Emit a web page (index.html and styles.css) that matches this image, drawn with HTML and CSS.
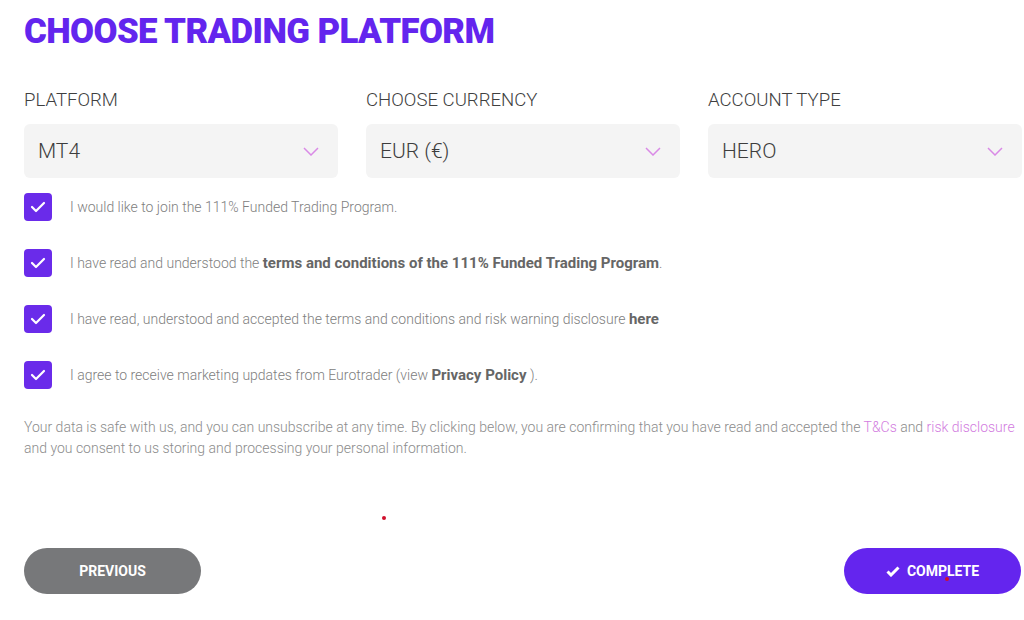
FILE: index.html
```html
<!DOCTYPE html>
<html>
<head>
<meta charset="utf-8">
<link rel="stylesheet" href="styles.css">
</head>
<body>
<main class="page">
  <h1 class="title">CHOOSE TRADING PLATFORM</h1>

  <div class="fields">
    <div class="field">
      <label class="label">PLATFORM</label>
      <div class="select"><span>MT4</span>
        <svg class="chev" width="16" height="9" viewBox="0 0 16 9"><path d="M1 1 L8 8 L15 1" fill="none" stroke="#d98ae6" stroke-width="1.5"/></svg>
      </div>
    </div>
    <div class="field">
      <label class="label">CHOOSE CURRENCY</label>
      <div class="select"><span>EUR (€)</span>
        <svg class="chev" width="16" height="9" viewBox="0 0 16 9"><path d="M1 1 L8 8 L15 1" fill="none" stroke="#d98ae6" stroke-width="1.5"/></svg>
      </div>
    </div>
    <div class="field">
      <label class="label">ACCOUNT TYPE</label>
      <div class="select"><span>HERO</span>
        <svg class="chev" width="16" height="9" viewBox="0 0 16 9"><path d="M1 1 L8 8 L15 1" fill="none" stroke="#d98ae6" stroke-width="1.5"/></svg>
      </div>
    </div>
  </div>

  <ul class="checks">
    <li class="check">
      <span class="box"><svg width="16" height="12" viewBox="0 0 16 12"><path d="M2 6 L6 10 L14 2" fill="none" stroke="#fff" stroke-width="2.2" stroke-linecap="round" stroke-linejoin="round"/></svg></span>
      <span class="ctext">I would like to join the 111% Funded Trading Program.</span>
    </li>
    <li class="check">
      <span class="box"><svg width="16" height="12" viewBox="0 0 16 12"><path d="M2 6 L6 10 L14 2" fill="none" stroke="#fff" stroke-width="2.2" stroke-linecap="round" stroke-linejoin="round"/></svg></span>
      <span class="ctext">I have read and understood the <b>terms and conditions of the 111% Funded Trading Program</b>.</span>
    </li>
    <li class="check">
      <span class="box"><svg width="16" height="12" viewBox="0 0 16 12"><path d="M2 6 L6 10 L14 2" fill="none" stroke="#fff" stroke-width="2.2" stroke-linecap="round" stroke-linejoin="round"/></svg></span>
      <span class="ctext">I have read, understood and accepted the terms and conditions and risk warning disclosure <b>here</b></span>
    </li>
    <li class="check">
      <span class="box"><svg width="16" height="12" viewBox="0 0 16 12"><path d="M2 6 L6 10 L14 2" fill="none" stroke="#fff" stroke-width="2.2" stroke-linecap="round" stroke-linejoin="round"/></svg></span>
      <span class="ctext">I agree to receive marketing updates from Eurotrader (view <b>Privacy Policy</b> ).</span>
    </li>
  </ul>

  <p class="note">Your data is safe with us, and you can unsubscribe at any time. By clicking below, you are confirming that you have read and accepted the <a class="link">T&amp;Cs</a> and <a class="link">risk disclosure</a> and you consent to us storing and processing your personal information.</p>

  <div class="actions">
    <button class="btn btn-prev">PREVIOUS</button>
    <button class="btn btn-complete"><svg width="14" height="11" viewBox="0 0 14 11"><path d="M1.5 5.5 L5 9 L12.5 1.5" fill="none" stroke="#fff" stroke-width="3" stroke-linejoin="miter"/></svg>COMPLETE</button>
  </div>
  <span class="dot dot-a"></span>
  <span class="dot dot-b"></span>
</main>
</body>
</html>
```

FILE: styles.css
```css
* { box-sizing: border-box; }
html, body { margin: 0; padding: 0; background: #fff; }
body { font-family: Roboto, "Liberation Sans", sans-serif; }

.page {
  position: relative;
  width: 1024px;
  height: 620px;
  padding: 10px 3px 0 24px;
}

.title {
  margin: 0;
  font-weight: 900;
  font-size: 34.8px;
  line-height: 42px;
  color: #6325ee;
  letter-spacing: -0.6px;
}

.fields {
  display: grid;
  grid-template-columns: repeat(3, 314px);
  column-gap: 28px;
  margin-top: 37px;
}
.label {
  display: block;
  font-weight: 300;
  font-size: 18.6px;
  line-height: 22px;
  color: #3f3f3f;
  margin-bottom: 13px;
}
.select {
  height: 54px;
  background: #f4f4f4;
  border-radius: 6px;
  display: flex;
  align-items: center;
  justify-content: space-between;
  padding: 0 19px 0 14px;
  font-weight: 300;
  font-size: 21px;
  color: #3d3d3d;
}
.chev { display: block; }

.checks {
  list-style: none;
  margin: 15px 0 0;
  padding: 0;
  display: flex;
  flex-direction: column;
  gap: 28px;
}
.check {
  display: flex;
  align-items: center;
  height: 28px;
}
.box {
  width: 28px;
  height: 28px;
  border-radius: 4px;
  background: #6a2bea;
  display: flex;
  align-items: center;
  justify-content: center;
  flex: none;
  margin-right: 18px;
}
.box svg { display: block; }
.ctext {
  font-weight: 300;
  font-size: 14px;
  color: #808080;
}
.ctext b { font-weight: 700; font-size: 15px; color: #666; }

.note {
  margin: 28px 0 0;
  font-weight: 300;
  font-size: 14px;
  line-height: 21px;
  color: #8c8c8c;
  width: 995px;
}
.link { color: #d27ce0; text-decoration: none; }

.actions {
  display: flex;
  justify-content: space-between;
  margin-top: 89px;
  width: 997px;
}
.btn {
  width: 177px;
  height: 46px;
  border: none;
  border-radius: 23px;
  color: #fff;
  font-family: Roboto, "Liberation Sans", sans-serif;
  font-weight: 700;
  font-size: 14px;
  display: flex;
  align-items: center;
  justify-content: center;
  gap: 7px;
  padding: 0;
}
.btn-prev { background: #77787a; }
.btn-complete { background: #6425ee; }
.btn svg { display: block; }

.dot {
  position: absolute;
  width: 4px;
  height: 4px;
  border-radius: 50%;
  background: #d0102c;
}
.dot-a { left: 382px; top: 516px; }
.dot-b { left: 945px; top: 577px; }
```
